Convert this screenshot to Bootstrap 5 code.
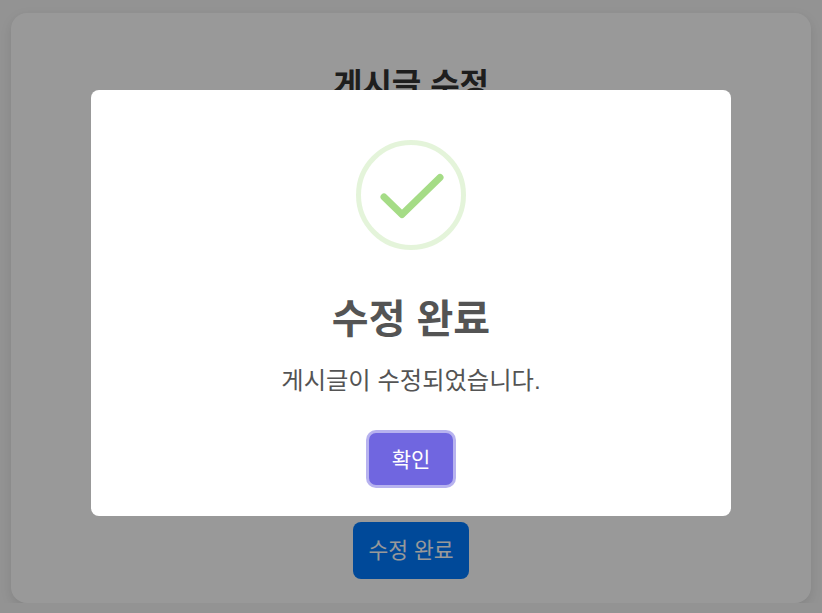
<!DOCTYPE html>
<html lang="ko">

<head>
    <meta charset="UTF-8">
    <title>게시글 수정</title>
    <link href="https://cdn.jsdelivr.net/npm/bootstrap@5.3.0/dist/css/bootstrap.min.css" rel="stylesheet">
    <style>
        body {
            background: #f5f5f5;
            font-family: "Liberation Sans", "Noto Sans CJK KR", sans-serif;
            overflow: hidden;
        }
        .page-wrap {
            width: 800px;
            height: 590px;
            margin: 13px auto 0;
            padding: 53px 0 24px;
            background: #fff;
            border-radius: 16px;
            box-shadow: 0 4px 12px rgba(0, 0, 0, .1);
        }
        .page-title {
            font-size: 32px;
            font-weight: 700;
            color: #333;
            margin: 0;
        }
        .save-btn {
            width: 116px;
            height: 57px;
            font-size: 21.5px;
            padding-top: 2px;
            background: #007bff;
            border: 0;
            border-radius: 8px;
            color: #fff;
        }
        .dim-layer {
            position: fixed;
            inset: 0;
            background: rgba(0, 0, 0, .4);
            padding-top: 90px;
        }
        .alert-box {
            width: 640px;
            height: 426px;
            padding-top: 50px;
            background: #fff;
            border-radius: 8px;
            color: #545454;
        }
        .alert-icon {
            width: 110px;
            height: 110px;
        }
        .alert-title {
            font-size: 40px;
            font-weight: 700;
            line-height: 1.2;
            margin: 45px 0 0;
            color: #545454;
        }
        .alert-text {
            font-size: 24.3px;
            line-height: 1.5;
            margin: 20px 0 0;
        }
        .ok-btn {
            width: 84px;
            height: 52px;
            margin-top: 34px;
            font-size: 21px;
            color: #fff;
            background: #7066e0;
            border: 0;
            border-radius: 7px;
            box-shadow: 0 0 0 3px rgba(112, 102, 224, .5);
        }
    </style>
</head>

<body>
    <div class="page-wrap d-flex flex-column align-items-center">
        <h2 class="page-title">게시글 수정</h2>
        <button class="save-btn mt-auto" type="button">수정 완료</button>
    </div>

    <div class="dim-layer">
        <div class="alert-box mx-auto d-flex flex-column align-items-center text-center">
            <svg class="alert-icon" viewBox="0 0 110 110" fill="none">
                <circle cx="55" cy="55" r="52.5" stroke="#a5dc86" stroke-opacity=".3" stroke-width="5"/>
                <path d="M28 57 L46 74.5 L84 37.5" stroke="#a5dc86" stroke-width="7" stroke-linecap="round" stroke-linejoin="round"/>
            </svg>
            <h2 class="alert-title">수정 완료</h2>
            <p class="alert-text">게시글이 수정되었습니다.</p>
            <button class="ok-btn" type="button">확인</button>
        </div>
    </div>

    <script src="https://cdn.jsdelivr.net/npm/bootstrap@5.3.0/dist/js/bootstrap.bundle.min.js"></script>
</body>

</html>
